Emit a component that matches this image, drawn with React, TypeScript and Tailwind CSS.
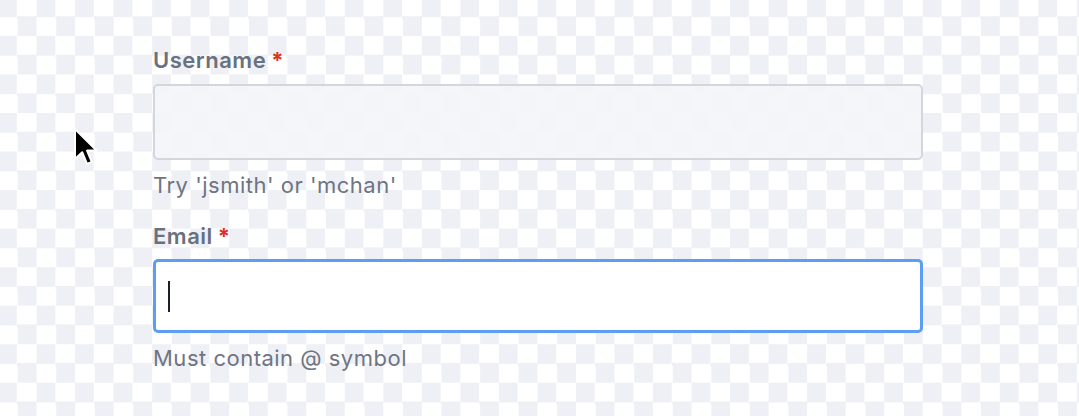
import React from "react";

const font = { fontFamily: "Inter, 'Noto Sans', sans-serif" };

function Field({
  label,
  hint,
  focused,
}: {
  label: string;
  hint: string;
  focused?: boolean;
}) {
  return (
    <div className="flex flex-col">
      <label className="flex items-baseline gap-[5px] text-[22px] leading-[26px] font-semibold text-[#687180] tracking-[0.5px]">
        {label}
        <span className="text-[#e0301e] font-bold">*</span>
      </label>
      <div
        className={
          focused
            ? "mt-[10px] h-[74px] w-[770px] rounded-[5px] border-[3px] border-[#5b9ef4] bg-white flex items-center pl-[12px]"
            : "mt-[11px] h-[76px] w-[770px] rounded-[5px] border-2 border-[#d3d6dc] bg-[#f4f5f8]/90"
        }
      >
        {focused && <span className="block w-[2px] h-[31px] bg-[#1a1f2b]" />}
      </div>
      <p className="mt-[12px] text-[22px] leading-[26px] text-[#6e7582] tracking-[0.5px]">{hint}</p>
    </div>
  );
}

export default function App() {
  return (
    <div
      className="relative w-[1079px] h-[416px] overflow-hidden bg-[repeating-conic-gradient(#fff_0_25%,#eff0f5_0_50%)] bg-[length:38.54px_38.54px] bg-[position:-2px_-2.6px]"
      style={font}
    >
      <div className="flex flex-col gap-[25px] pl-[153px] pt-[47px]">
        <Field label="Username" hint="Try 'jsmith' or 'mchan'" />
        <Field label="Email" hint="Must contain @ symbol" focused />
      </div>
      <svg
        className="absolute left-[73px] top-[127px]"
        width="26"
        height="40"
        viewBox="0 0 13 20"
      >
        <path
          d="M1 1 L1 16 L4.6 12.6 L7 18.4 L9.4 17.4 L7 11.8 L11.8 11.8 Z"
          fill="#000"
          stroke="#fff"
          strokeWidth="1"
          strokeLinejoin="round"
        />
      </svg>
    </div>
  );
}
